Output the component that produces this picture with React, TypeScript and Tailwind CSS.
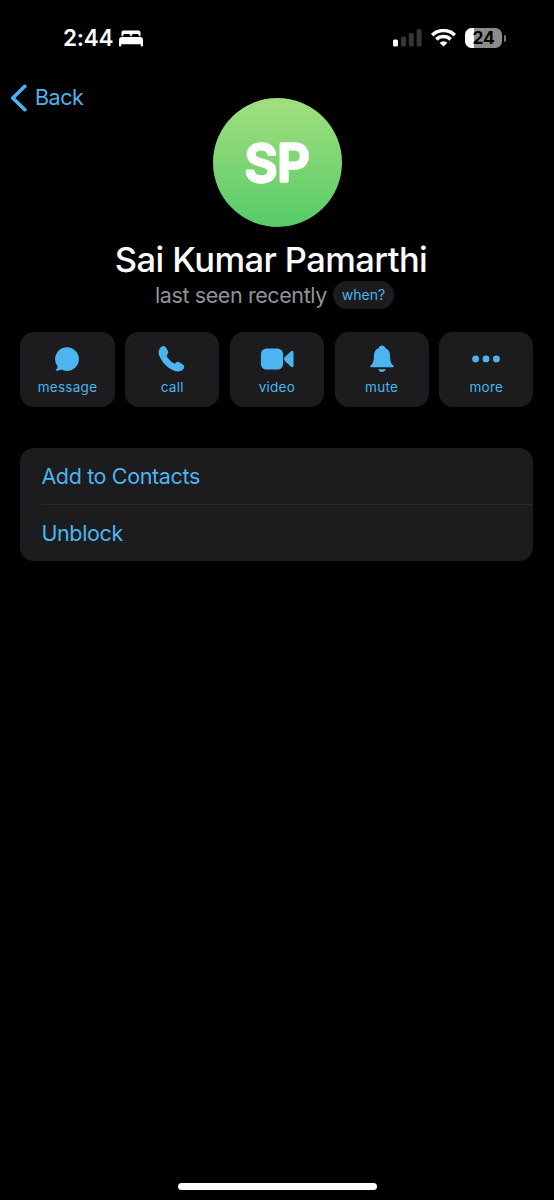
import type { ReactNode } from "react";

function StatusBar() {
  return (
    <div className="flex h-[76px] items-center pl-[63px] pr-[48px]">
      <span className="w-[56px] whitespace-nowrap text-[22.5px] font-semibold leading-none tracking-[-0.2px]">
        2:44
      </span>
      <svg className="h-[17px] w-[24px]" viewBox="0 0 24 17" fill="currentColor">
        <path d="M2.5 6.2V2.6Q2.5.6 4.5.6h15q2 0 2 2v3.6h-1.6V5.4q0-1.5-1.5-1.5h-4.2q-1.5 0-1.5 1.5v.8h-1.4v-.8q0-1.5-1.5-1.5H5.6q-1.5 0-1.5 1.5v.8z" />
        <path d="M3 6.9h18q3 0 3 3v5.7q0 .9-.9.9h-.5q-.9 0-.9-.9v-1.300H2.300v1.300q0 .9-.9.9H.9q-.9 0-.9-.9V9.900q0-3 3-3z" />
      </svg>

      <div className="ml-auto flex items-center">
        <svg className="h-[18px] w-[29px]" viewBox="0 0 29 18">
          <rect x="0" y="10.5" width="5" height="7" rx="1.5" fill="#fff" />
          <rect x="8" y="7.6" width="5" height="9.9" rx="1.5" fill="#363636" />
          <rect x="15.8" y="4" width="5" height="13.5" rx="1.5" fill="#363636" />
          <rect x="23.6" y="0" width="5" height="17.5" rx="1.5" fill="#363636" />
        </svg>
        <svg className="ml-[9px] h-[18px] w-[25px]" viewBox="0 0 25 18" fill="none" stroke="#fff" strokeWidth="3.6">
          <path d="M1.2 6.1a16.3 16.3 0 0 1 22.6 0" />
          <path d="M5.3 10.4a10.4 10.4 0 0 1 14.4 0" />
          <path d="M12.5 17.4l-3.9-3.6a5.6 5.6 0 0 1 7.8 0z" fill="#fff" stroke="none" />
        </svg>
        <div className="ml-[9px] flex h-[20px] w-[37px] items-center justify-center rounded-[6.5px] bg-[linear-gradient(to_right,#fff_24%,#8b8b8b_24%)] text-[17.5px] font-bold leading-none tracking-[-0.3px] text-black">
          24
        </div>
        <div className="ml-[2px] h-[7px] w-[2px] rounded-r-full bg-[#7a7a7a]" />
      </div>
    </div>
  );
}

function Avatar() {
  return (
    <div className="size-[129px] rounded-full bg-linear-to-b from-[#a1df7e] to-[#53cb68]">
      <svg className="size-full" viewBox="0 0 129 129">
        <text
          x="64.2"
          y="83"
          textAnchor="middle"
          fill="#fff"
          stroke="#fff"
          strokeWidth="3.4"
          strokeLinejoin="round"
          className="font-['Inter',sans-serif] text-[50.5px] font-medium"
        >
          SP
        </text>
      </svg>
    </div>
  );
}

function MessageIcon() {
  return (
    <svg className="h-[28px] w-[34px]" viewBox="0 0 34 28" fill="currentColor">
      <path d="M17 2.3a11.8 11.8 0 1 1-5.5 22.2c-1.5.9-3.7 1.4-5.4 1.1-.6-.1-.7-.7-.2-1.1 1.1-.9 1.7-1.9 1.8-3.1A11.8 11.8 0 0 1 17 2.3z" />
    </svg>
  );
}

function CallIcon() {
  return (
    <svg className="h-[28px] w-[34px]" viewBox="0 0 34 28" fill="currentColor">
      <path d="M6 2.1C7.5.6 9.4.4 10.5 2l2.200 3.500c1 1.600.7 2.700-.4 4-.7.9-.7 1.500-.1 2.500 1.600 2.500 3.500 4.400 6 6 1 .6 1.700.6 2.500-.1 1.300-1.200 2.500-1.400 4-.4l3.400 2.300c1.600 1.100 1.500 2.900.1 4.400-2.200 2.300-5.100 2.900-9 1.500C12.400 23.200 7.300 18 4.400 11.100 2.800 7.300 3.500 4.600 6 2.100z" />
    </svg>
  );
}

function VideoIcon() {
  return (
    <svg className="h-[28px] w-[34px]" viewBox="0 0 34 28" fill="currentColor">
      <rect x="0.9" y="3.6" width="22.2" height="21" rx="5.4" />
      <path d="M25.300 11.600l5.500-5.100c1.300-1.200 2.700-.9 2.700.9v13.200c0 1.800-1.400 2.100-2.700.9l-5.500-5.100c-1.700-1.600-1.700-3.200 0-4.800z" />
    </svg>
  );
}

function MuteIcon() {
  return (
    <svg className="h-[28px] w-[34px]" viewBox="0 0 34 28" fill="currentColor">
      <path d="M17 .6c1.9 0 2.9 1 3.2 2.3 3.4 1.4 4.900 4.200 4.900 8.100 0 5 .7 7.300 3.200 9.600 1 1 .6 1.700-.7 1.700H6.400c-1.300 0-1.700-.7-.7-1.700 2.500-2.300 3.200-4.600 3.200-9.600 0-3.900 1.500-6.700 4.900-8.100C14.100 1.600 15.100.6 17 .6z" />
      <path d="M13.200 24.200h7.600c-.4 1.600-1.900 2.700-3.800 2.700s-3.400-1.100-3.800-2.700z" />
    </svg>
  );
}

function MoreIcon() {
  return (
    <svg className="h-[28px] w-[34px]" viewBox="0 0 34 28" fill="currentColor">
      <circle cx="6.6" cy="13.9" r="3.4" />
      <circle cx="17" cy="13.9" r="3.4" />
      <circle cx="27.4" cy="13.9" r="3.4" />
    </svg>
  );
}

function ActionButton({ icon, label }: { icon: ReactNode; label: string }) {
  return (
    <button className="flex h-[75px] flex-1 flex-col items-center rounded-[14px] bg-[#1c1c1e] pt-[13px] text-[#4cb4ef]">
      {icon}
      <span className="mt-[5px] text-[13.5px] leading-[18px] tracking-[0.28px]">{label}</span>
    </button>
  );
}

export default function App() {
  return (
    <div className="flex h-[1200px] w-[554px] flex-col overflow-hidden bg-black font-['Inter',sans-serif] text-white">
      <StatusBar />

      <div className="grid grid-cols-[1fr_129px_1fr] pl-[9.5px] pr-[9.5px] pt-[22px]">
        <button className="-mt-[15px] flex h-[30px] items-center self-start text-[21.5px] leading-none text-[#4cb4ef]">
          <svg className="h-[28px] w-[17px]" viewBox="0 0 17 28" fill="none" stroke="currentColor" strokeWidth="3.6" strokeLinecap="round" strokeLinejoin="round">
            <path d="M14.8 2.3L2.800 14l12 11.700" />
          </svg>
          <span className="ml-[8.5px] tracking-[-0.5px]">Back</span>
        </button>
        <Avatar />
      </div>

      <h1 className="mt-[12px] whitespace-nowrap pr-[12px] text-center text-[34.5px] font-medium leading-[42px] tracking-[-0.58px]">
        Sai Kumar Pamarthi
      </h1>
      <div className="flex h-[28px] items-center pl-[155px]">
        <span className="w-[178px] whitespace-nowrap text-[21.5px] tracking-[-0.4px] text-[#929297]">
          last seen recently
        </span>
        <button className="h-[28px] w-[61px] rounded-full bg-[#1c1c1e] pb-[2px] text-[14px] text-[#4cb4ef]">
          when?
        </button>
      </div>

      <div className="mt-[23px] flex gap-[10.5px] pl-[20.4px] pr-[20.6px]">
        <ActionButton icon={<MessageIcon />} label="message" />
        <ActionButton icon={<CallIcon />} label="call" />
        <ActionButton icon={<VideoIcon />} label="video" />
        <ActionButton icon={<MuteIcon />} label="mute" />
        <ActionButton icon={<MoreIcon />} label="more" />
      </div>

      <div className="ml-[20.4px] mr-[20.6px] mt-[41px] rounded-[14px] bg-[#1c1c1e] pl-[21px] text-[21.5px] tracking-[-0.36px] text-[#4cb4ef]">
        <button className="flex h-[57px] w-full items-center border-b border-[#2b2b2d]">Add to Contacts</button>
        <button className="flex h-[56px] w-full items-center">Unblock</button>
      </div>

      <div className="mx-auto mb-[10px] mt-auto h-[7px] w-[199px] rounded-full bg-white" />
    </div>
  );
}
